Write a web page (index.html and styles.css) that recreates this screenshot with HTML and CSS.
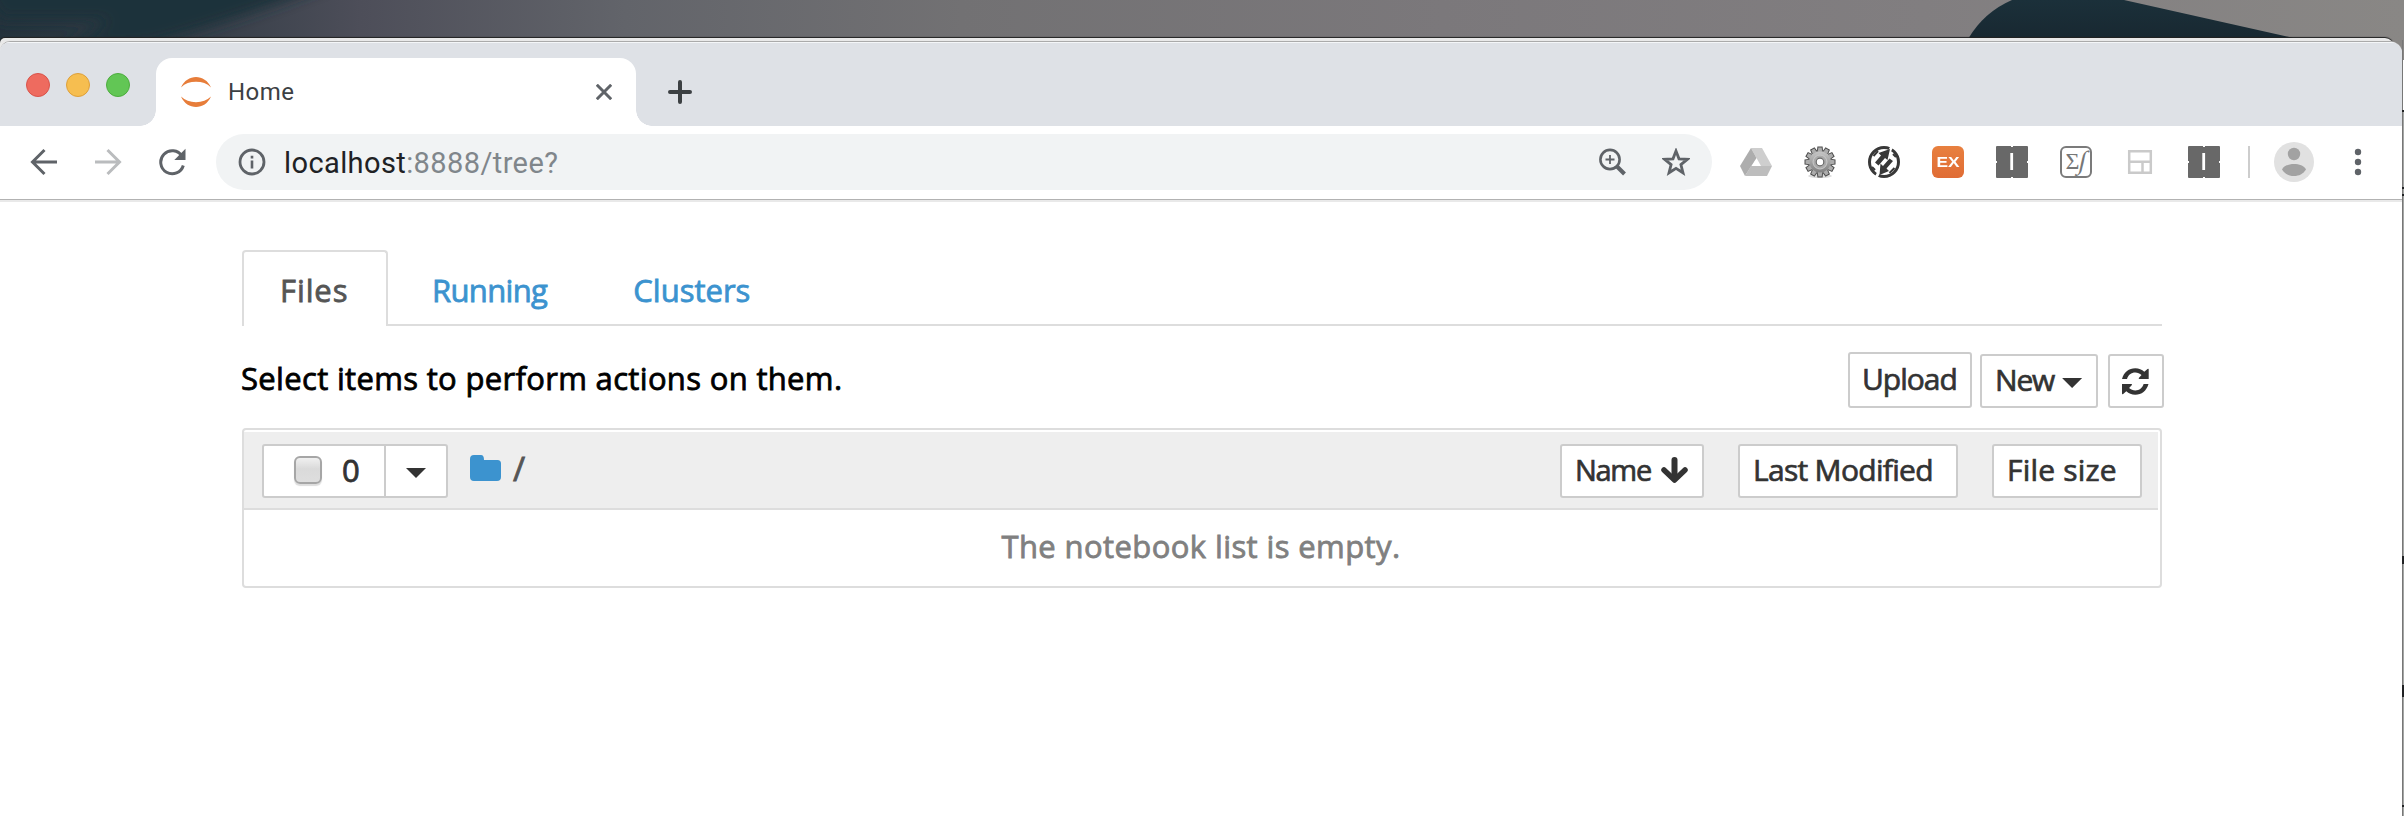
FILE: index.html
```html
<!DOCTYPE html>
<html lang="en">
<head>
<meta charset="utf-8">
<title>Home</title>
<link rel="stylesheet" href="styles.css">
</head>
<body>
<div class="desktop">
  <svg class="wallpaper" width="2404" height="60" viewBox="0 0 2404 60">
    <defs>
      <linearGradient id="wall" x1="0" x2="1"><stop offset="0" stop-color="#24323c"/><stop offset=".08" stop-color="#343d47"/><stop offset=".15" stop-color="#4d4e59"/><stop offset=".26" stop-color="#62646a"/><stop offset=".4" stop-color="#727173"/><stop offset=".6" stop-color="#7b787b"/><stop offset=".8" stop-color="#817e80"/><stop offset="1" stop-color="#898785"/></linearGradient>
      <linearGradient id="shape" x1="0" x2="0" y1="0" y2="1"><stop offset="0" stop-color="#1b303a"/><stop offset="1" stop-color="#182831"/></linearGradient>
      <filter id="soft" x="-10%" y="-100%" width="120%" height="300%"><feGaussianBlur stdDeviation="7"/></filter>
    </defs>
    <rect width="2404" height="60" fill="url(#wall)"/>
    <path d="M-20-20H340C270 8 200 30 150 44L60 50L110 20L0 20Z" fill="#1f303a" filter="url(#soft)"/>
    <path d="M1968 39Q1984 12 2012 0H2124L2298 39Z" fill="url(#shape)"/>
  </svg>
  <div class="behind"></div>
  <div class="window">
    <header class="tabstrip">
      <div class="lights"><i class="light red"></i><i class="light yellow"></i><i class="light green"></i></div>
      <div class="tab">
        <svg class="favicon" width="30" height="30" viewBox="0 0 30 30" fill="#e77d3a"><path d="M0 10.500C3 3.500 9 0 15 0S27 3.500 30 10.500C26 6.500 21 4.800 15 4.800S4 6.500 0 10.500ZM0 19.500C3 26.500 9 30 15 30S27 26.500 30 19.500C26 23.500 21 25.200 15 25.200S4 23.500 0 19.500Z"/></svg>
        <span class="tab-title">Home</span>
        <svg class="tab-close" width="16" height="16" viewBox="0 0 16 16" stroke="#5f6368" stroke-width="3"><path d="M.8.800 15.200 15.200M15.200.800.800 15.200"/></svg>
      </div>
      <svg class="new-tab" width="24" height="24" viewBox="0 0 24 24" stroke="#3c4043" stroke-width="4" stroke-linecap="round"><path d="M12 2V22M2 12H22"/></svg>
    </header>
    <nav class="toolbar">
      <svg class="back" width="28" height="28" viewBox="0 0 28 28" fill="none" stroke="#5f6368" stroke-width="3"><path d="M14.500 2 2.500 14 14.500 26M2.500 14H27"/></svg>
      <svg class="forward" width="28" height="28" viewBox="0 0 28 28" fill="none" stroke="#babcbe" stroke-width="3"><path d="M13.500 2 25.500 14 13.500 26M25.500 14H1"/></svg>
      <svg class="reload" width="28" height="28" viewBox="0 0 28 28" fill="none"><path d="M24 8.200A11.500 11.500 0 1 0 25.300 17.500" stroke="#5f6368" stroke-width="3"/><path d="M27.500.800V12H16.300Z" fill="#5f6368"/></svg>
      <div class="omnibox">
        <svg class="info" width="28" height="28" viewBox="0 0 28 28"><circle cx="14" cy="14" r="12" fill="none" stroke="#5f6368" stroke-width="2.800"/><path d="M12.700 12.500h2.600v8h-2.600zM12.700 7.800h2.600v2.700h-2.600z" fill="#5f6368"/></svg>
        <span class="url">localhost<span class="url-rest">:8888/tree?</span></span>
        <svg class="magnify" width="28" height="28" viewBox="0 0 28 28" fill="none" stroke="#5f6368"><circle cx="12" cy="11.500" r="9.600" stroke-width="2.600"/><path d="M12 7v9M7.500 11.500h9" stroke-width="1.800"/><path d="M19 18.500 26.500 26" stroke-width="4"/></svg>
        <svg class="star" width="28" height="28" viewBox="0 0 28 28"><path d="M14 3 17 10.800 25.300 11.300 18.900 16.600 21 24.800 14 20.300 7 24.800 9.100 16.600 2.700 11.300 11 10.800Z" fill="none" stroke="#5f6368" stroke-width="2.800"/></svg>
      </div>
      <div class="extensions">
        <svg width="32" height="32" viewBox="0 0 32 32"><path d="M11 2h11l10 18h-11L16.500 12Z" fill="#cecece"/><path d="M11 2 0 20l5 10L16.500 12Z" fill="#adadad"/><path d="M5 30h22l5-10H11Z" fill="#bdbdbd"/><path d="M16.500 13 20 20h-8Z" fill="#fff"/></svg>
        <svg width="32" height="32" viewBox="0 0 32 32">
          <defs>
            <linearGradient id="gear" x1="0" x2="0" y1="0" y2="1"><stop offset="0" stop-color="#c6c6c6"/><stop offset="1" stop-color="#808080"/></linearGradient>
            <path id="tooth" d="M13.800 6 14.300 1.500H17.700L18.200 6Z"/>
            <g id="teeth"><use href="#tooth"/><use href="#tooth" transform="rotate(30 16 16)"/><use href="#tooth" transform="rotate(60 16 16)"/><use href="#tooth" transform="rotate(90 16 16)"/><use href="#tooth" transform="rotate(120 16 16)"/><use href="#tooth" transform="rotate(150 16 16)"/><use href="#tooth" transform="rotate(180 16 16)"/><use href="#tooth" transform="rotate(210 16 16)"/><use href="#tooth" transform="rotate(240 16 16)"/><use href="#tooth" transform="rotate(270 16 16)"/><use href="#tooth" transform="rotate(300 16 16)"/><use href="#tooth" transform="rotate(330 16 16)"/></g>
          </defs>
          <ellipse cx="16" cy="30" rx="12" ry="2" fill="#ddd"/>
          <use href="#teeth" fill="#a9a9a9" stroke="#4c4c4c" stroke-width="2"/>
          <circle cx="16" cy="16" r="11.500" fill="url(#gear)" stroke="#555" stroke-width="1"/>
          <use href="#teeth" fill="#acacac"/>
          <circle cx="16" cy="16" r="10.500" fill="url(#gear)"/>
          <circle cx="16" cy="16" r="7" fill="#aaa" stroke="#cacaca"/>
          <circle cx="16" cy="16" r="3.800" fill="#fff" stroke="#6a6a6a" stroke-width="1.200"/>
        </svg>
        <svg width="32" height="32" viewBox="0 0 32 32"><circle cx="16" cy="16" r="14.500" fill="#fff" stroke="#383838" stroke-width="3"/><path d="M22.500 0 25 1.500 9.500 32 7 30.500Z" fill="#fff"/><path d="M7 16.500 13 9.500 10.500 7 22 3 19.500 14 17 12 10.500 19.500Z" fill="#383838"/><path d="M25 15 18.500 22.500 21 25 11.500 29 12.500 17.500 15 20 21.500 12.500Z" fill="#383838"/><path d="M5.500 10 10 5M21.500 27 26.500 22M4 21l3 3M25 8l3 3" stroke="#383838" stroke-width="2"/></svg>
        <span class="ex"><span class="ex-label">EX</span></span>
        <svg width="32" height="32" viewBox="0 0 32 32"><rect width="32" height="32" rx="1" fill="#686868"/><path d="M14.300 7h2.800v17h-2.800zM15 0h2v1h-2zM15 31h2v1h-2zM0 15h1v2H0zM31 15h1v2h-1z" fill="#fff"/></svg>
        <span class="sigma"><span class="sum">Σ</span><span class="integral">∫</span></span>
        <svg width="32" height="32" viewBox="0 0 32 32" fill="none" stroke="#cacaca" stroke-width="2.500"><path d="M5.200 5.200h21.600v21.600H5.200zM5.200 15.800h21.600M18.500 15.800v11"/></svg>
        <svg width="32" height="32" viewBox="0 0 32 32"><rect width="32" height="32" rx="1" fill="#686868"/><path d="M14.300 7h2.800v17h-2.800zM15 0h2v1h-2zM15 31h2v1h-2zM0 15h1v2H0zM31 15h1v2h-1z" fill="#fff"/></svg>
      </div>
      <i class="separator"></i>
      <svg class="avatar" width="40" height="40" viewBox="0 0 40 40"><circle cx="20" cy="20" r="20" fill="#e1e1e1"/><circle cx="20" cy="12" r="6.200" fill="#a2a2a2"/><path d="M8 27.500C10 23.500 15 22 20 22S30 23.500 32 27.500C29 32 25 34 20 34S11 32 8 27.500Z" fill="#a2a2a2"/></svg>
      <svg class="more" width="8" height="28" viewBox="0 0 8 28" fill="#5f6368"><circle cx="4" cy="4" r="3.200"/><circle cx="4" cy="14" r="3.200"/><circle cx="4" cy="24" r="3.200"/></svg>
    </nav>
    <main class="page">
      <div class="tabs">
        <a class="page-tab active">Files</a>
        <a class="page-tab running">Running</a>
        <a class="page-tab clusters">Clusters</a>
      </div>
      <div class="actions">
        <span class="hint">Select items to perform actions on them.</span>
        <button class="btn upload">Upload</button>
        <button class="btn new">New<i class="caret"></i></button>
        <button class="btn refresh"><svg width="27" height="27" viewBox="0 0 27 27" fill="#333"><path d="M0 11C2 4 7 .3 13.300.3c3.600 0 6.600 1.300 9 3.500L25.500 1Q26.700.2 26.700 1.500V11H17.500Q16 11 17 9.700L19.500 7.100C17.700 5.500 15.700 4.600 13.300 4.600 9.200 4.600 6.300 7 5 11ZM26.500 16C24.500 23 19.600 26.700 13.300 26.700c-3.600 0-6.600-1.300-9-3.500L1.200 26Q0 26.800 0 25.500V16H9.200Q10.700 16 9.700 17.300L7.100 19.900c1.800 1.600 3.800 2.500 6.200 2.500 4.100 0 7-2.400 8.300-6.400Z"/></svg></button>
      </div>
      <section class="list">
        <div class="list-head">
          <div class="select-group">
            <span class="select-all"><i class="checkbox"></i><span class="count">0</span></span>
            <span class="select-menu"><i class="caret"></i></span>
          </div>
          <svg class="folder" width="31" height="26" viewBox="0 0 31 26"><path d="M4 0H11Q14 0 14 5H27.500Q31 5 31 8.500V22Q31 26 27 26H4Q0 26 0 22V4Q0 0 4 0Z" fill="#3c93cf"/></svg>
          <span class="slash">/</span>
          <button class="btn sort-name"><span class="name-label">Name</span><svg width="27" height="26" viewBox="0 0 27 26" fill="none" stroke="#333" stroke-linecap="round" stroke-linejoin="round"><path d="M13.500 3V21" stroke-width="6"/><path d="M3 13 13.500 23 24 13" stroke-width="5.500"/></svg></button>
          <button class="btn sort-modified">Last Modified</button>
          <button class="btn sort-size">File size</button>
        </div>
        <div class="empty">The notebook list is empty.</div>
      </section>
    </main>
  </div>
  <svg class="edge" width="2" height="776" viewBox="0 0 2 776"><path fill="#a4a6a4" d="M0 72h2v704H0z"/><path fill="#777" d="M0 0h1v776H0z"/><path fill="#202224" d="M0 70h2v2H0zM0 147h2v2H0zM0 154h2v2H0zM0 516h2v8H0zM0 645h2v12H0zM0 765h2v2H0z"/></svg>
</div>
</body>
</html>
```

FILE: styles.css
```css
* { box-sizing: border-box; }
body { margin: 0; width: 2404px; height: 816px; overflow: hidden; background: #fff; font-family: "Open Sans", "Noto Sans", sans-serif; }
svg { display: block; flex: none; }
i { display: block; flex: none; }

.desktop { position: relative; width: 2404px; height: 816px; padding-top: 41px; overflow: hidden; }
.wallpaper { position: absolute; left: 0; top: 0; }
.behind { position: absolute; left: 0; top: 38px; width: 2394px; height: 20px; background: #e9e9e9; border-radius: 5px 9px 0 0; box-shadow: 0 -1px 1px #222; }
.edge { position: absolute; left: 2402px; top: 40px; }
.window { position: relative; width: 2402px; height: 775px; background: #fff; border-top: 1px solid #aaa; border-radius: 10px 12px 0 0; overflow: hidden; }

.tabstrip { display: flex; align-items: flex-end; height: 84px; background: #dee1e6; border-top: 1px solid #f4f6f8; }
.lights { display: flex; gap: 16px; padding: 0 0 29px 26px; width: 156px; }
.light { width: 24px; height: 24px; border-radius: 50%; border: 1px solid; }
.red { background: #ee6b5f; border-color: #d9534a; }
.yellow { background: #f6be50; border-color: #dea03a; }
.green { background: #62c655; border-color: #4dad3e; }
.tab { position: relative; display: flex; align-items: center; width: 480px; height: 68px; padding: 0 24px 0 25px; background: #fff; border-radius: 16px 16px 0 0; }
.tab::before, .tab::after { content: ""; position: absolute; bottom: 0; width: 16px; height: 16px; }
.tab::before { left: -16px; background: radial-gradient(circle at 0 0, transparent 15.500px, #fff 16px); }
.tab::after { right: -16px; background: radial-gradient(circle at 100% 0, transparent 15.500px, #fff 16px); }
.tab-title { margin-left: 17px; font: 24px/28px Roboto, sans-serif; color: #3c4043; letter-spacing: .5px; }
.tab-close { margin-left: auto; }
.new-tab { margin: 0 0 22px 32px; }

.toolbar { display: flex; align-items: center; height: 73px; padding: 0 0 1px 30px; }
.forward { margin-left: 36px; }
.reload { margin-left: 36px; }
.omnibox { display: flex; align-items: center; width: 1496px; height: 56px; margin-left: 30px; padding: 0 22px; background: #f1f3f4; border-radius: 28px; }
.url { margin-left: 18px; padding-top: 1px; font: 29px/36px Roboto, sans-serif; color: #202124; letter-spacing: .4px; }
.url-rest { color: #80868b; }
.magnify { margin-left: auto; }
.star { margin-left: 36px; }
.extensions { display: flex; gap: 32px; margin-left: 28px; }
.ex { width: 32px; height: 32px; border-radius: 6px; background: linear-gradient(#e8803f, #e06c35); text-align: center; }
.ex-label { display: inline-block; color: #fff; font: bold 15px/32px "Liberation Sans", sans-serif; transform: scaleX(1.15); }
.sigma { display: flex; justify-content: center; width: 32px; height: 32px; border: 2px solid #7b7b7b; border-radius: 6px; color: #777; font: 24px/27px "Liberation Serif", serif; overflow: hidden; }
.integral { font-size: 26px; line-height: 25px; transform: skewX(-12deg); }
.separator { width: 2px; height: 32px; margin-left: 28px; background: #cdcdcd; }
.avatar { margin-left: 24px; }
.more { margin-left: 40px; }

.page { height: 617px; padding: 49px 240px 0 242px; border-top: 1px solid #b2b2b2; box-shadow: inset 0 2px #e9e9e9; font-size: 31px; line-height: 40px; -webkit-text-stroke: .8px; }
.tabs { display: flex; height: 77px; width: 1920px; padding-top: 1px; box-shadow: inset 0 -2px #ddd; }
.page-tab { height: 76px; padding: 20px 40px 0 44px; color: #3c93cf; }
.page-tab.active { width: 146px; padding: 18px 0 0 36px; border: 2px solid #ddd; border-bottom: 0; border-radius: 4px 4px 0 0; background: #fff; color: #555; letter-spacing: .9px; }
.running { letter-spacing: -.65px; }
.clusters { padding-left: 46px; }
.actions { display: flex; align-items: flex-end; height: 82px; width: 1922px; }
.hint { margin: 0 auto 10px -1px; white-space: nowrap; color: #000; letter-spacing: .33px; }
.btn { display: flex; align-items: center; height: 54px; padding: 0 0 2px 13px; background: #fff; border: 2px solid #ccc; border-radius: 3px; color: #333; font: 30px/40px "Open Sans", sans-serif; white-space: nowrap; -webkit-text-stroke: .7px; }
.caret { width: 20px; height: 10px; background: #333; clip-path: polygon(0 0, 100% 0, 50% 100%); }
.upload { width: 124px; height: 56px; padding-left: 12px; letter-spacing: -1px; }
.new { width: 118px; margin-left: 8px; padding-left: 13px; letter-spacing: -1.2px; }
.new .caret { margin: 6px 0 0 8px; }
.refresh { width: 56px; margin-left: 10px; padding: 0 0 0 12px; }

.list { width: 1920px; height: 160px; margin-top: 20px; border: 2px solid #ddd; border-radius: 4px; }
.list-head { display: flex; align-items: center; width: 1914px; height: 78px; margin-top: 2px; padding: 0 16px 0 18px; background: #eee; border-bottom: 2px solid #ddd; }
.select-group { display: flex; width: 186px; height: 54px; margin-top: 2px; background: #fff; border: 2px solid #ccc; border-radius: 3px; }
.select-all { display: flex; align-items: center; width: 122px; padding-left: 30px; border-right: 2px solid #ccc; }
.checkbox { width: 28px; height: 28px; margin-bottom: 3px; border: 2px solid #a6a6a6; border-radius: 6px; background: linear-gradient(#f0f0f0, #dadada 45%, #dedede); box-shadow: 0 2px 1px #ddd; }
.count { margin: 0 0 3px 20px; color: #333; }
.select-menu { padding: 22px 0 0 20px; }
.folder { margin-left: 22px; margin-bottom: 4px; }
.slash { margin: 0 0 3px 12px; color: #555; font-size: 33px; }
.list-head .btn { margin-top: 2px; padding-bottom: 3px; }
.list-head .sort-name { width: 144px; margin-left: auto; padding-bottom: 0; }
.name-label { margin-bottom: 3px; font-size: 29px; letter-spacing: -1.300px; }
.sort-name svg { margin-left: 10px; margin-bottom: 2px; }
.sort-modified { width: 220px; margin-left: 34px; letter-spacing: -.7px; }
.sort-size { width: 150px; margin-left: 34px; letter-spacing: .2px; }
.empty { padding: 16px 2px 0 0; text-align: center; color: #808080; letter-spacing: .4px; }
```
